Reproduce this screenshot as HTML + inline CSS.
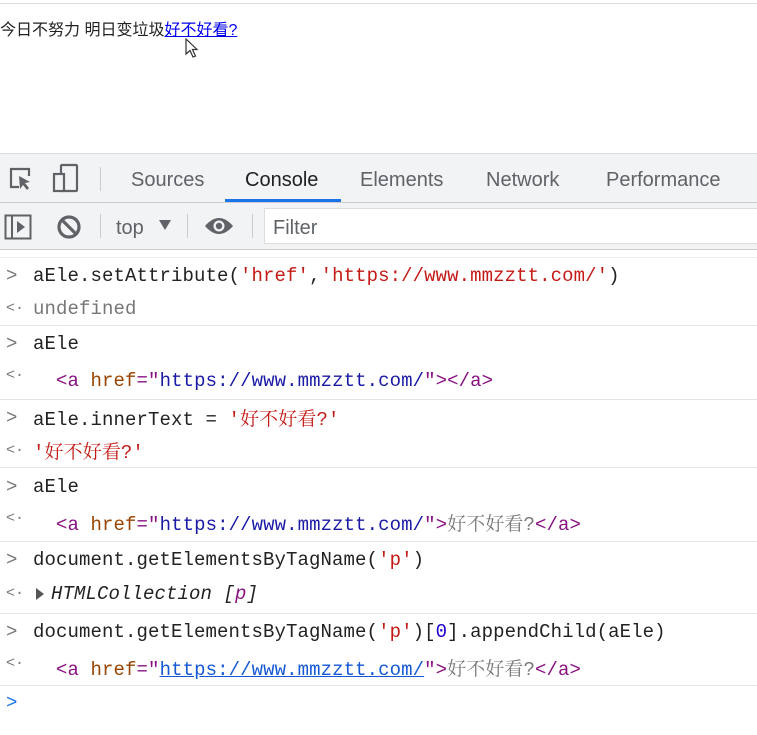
<!DOCTYPE html>
<html><head><meta charset="utf-8"><style>
*{margin:0;padding:0;box-sizing:border-box}
body{width:757px;height:735px;overflow:hidden;background:#fff;position:relative;font-family:"Liberation Sans","Noto Sans CJK SC",sans-serif}
.abs{position:absolute}
.mono{font-family:"Liberation Mono","Noto Serif CJK SC",monospace;font-size:19px;line-height:24px;white-space:pre;color:#222;letter-spacing:0.1px}
.cj{font-family:"Noto Serif CJK SC",serif}
.hr{position:absolute;left:0;right:0;height:1px;background:#e6e6e6}
.pr{position:absolute;left:6px;color:#777;font-family:"Liberation Mono",monospace;font-size:19px;line-height:24px}
.s{color:#c41a16}.t{color:#881280}.at{color:#994500}.v{color:#1a1aa6}.g{color:#777}
.tab{position:absolute;top:166px;font-size:20px;color:#5f6368;line-height:28px}
</style></head><body>
<div class="hr" style="top:3px;background:#ddd"></div>
<div class="abs" style="left:0;top:20px;font-size:16px;line-height:21px;color:#222">今日不努力 明日变垃圾<span style="color:#0000ee;text-decoration:underline">好不好看?</span></div>
<svg class="abs" style="left:185px;top:38px" width="14" height="22" viewBox="0 0 14 22"><path d="M1 1 L1 16 L5 12.5 L8 19 L10.5 18 L7.5 11.5 L12 11.5 Z" fill="#fff" stroke="#333" stroke-width="1.2"/></svg>

<div class="abs" style="left:0;top:153px;width:757px;height:50px;background:#f1f3f4;border-top:1px solid #dadce0;border-bottom:1px solid #cbcdd1"></div>
<svg class="abs" style="left:6px;top:164px" width="30" height="30" viewBox="0 0 30 30"><path d="M13 23 H5 V5 H23 V12" fill="none" stroke="#5f6368" stroke-width="2.2"/><path d="M13 12 L14 25 L17 21 L21 26 L23 24 L19 19 L24 18 Z" fill="#5f6368"/></svg>
<svg class="abs" style="left:52px;top:163px" width="30" height="30" viewBox="0 0 30 30"><rect x="9" y="2" width="16" height="26" rx="1" fill="none" stroke="#5f6368" stroke-width="2.2"/><rect x="2" y="11" width="10" height="17" fill="#f1f3f4" stroke="#5f6368" stroke-width="2.2"/></svg>
<div class="abs" style="left:100px;top:167px;width:1px;height:24px;background:#ccc"></div>
<div class="tab" style="left:131px">Sources</div>
<div class="tab" style="left:245px;color:#202124">Console</div>
<div class="abs" style="left:225px;top:199px;width:116px;height:3px;background:#1a73e8"></div>
<div class="tab" style="left:360px">Elements</div>
<div class="tab" style="left:486px">Network</div>
<div class="tab" style="left:606px">Performance</div>

<div class="abs" style="left:0;top:203px;width:757px;height:47px;background:#f1f3f4;border-bottom:1px solid #cbcdd1"></div>
<svg class="abs" style="left:4px;top:214px" width="28" height="26" viewBox="0 0 28 26"><rect x="1.5" y="1.5" width="25" height="23" fill="none" stroke="#5f6368" stroke-width="2"/><line x1="8" y1="2" x2="8" y2="24" stroke="#5f6368" stroke-width="2"/><path d="M13 7 L21 13 L13 19 Z" fill="#5f6368"/></svg>
<svg class="abs" style="left:56px;top:214px" width="26" height="26" viewBox="0 0 26 26"><circle cx="13" cy="13" r="10" fill="none" stroke="#5f6368" stroke-width="3.2"/><line x1="6" y1="6" x2="20" y2="20" stroke="#5f6368" stroke-width="3.2"/></svg>
<div class="abs" style="left:100px;top:214px;width:1px;height:24px;background:#ccc"></div>
<div class="abs" style="left:116px;top:214px;font-size:20px;line-height:28px;color:#5f6368">top</div>
<svg class="abs" style="left:158px;top:219px" width="14" height="12"><path d="M1 1 H13 L7 11 Z" fill="#5f6368"/></svg>
<div class="abs" style="left:187px;top:214px;width:1px;height:24px;background:#ccc"></div>
<svg class="abs" style="left:204px;top:216px" width="30" height="20" viewBox="0 0 30 20"><path d="M1 10 Q15 -6 29 10 Q15 26 1 10 Z" fill="#5f6368"/><circle cx="15" cy="10" r="5.5" fill="#f1f3f4"/><circle cx="15" cy="10" r="3.2" fill="#5f6368"/></svg>
<div class="abs" style="left:252px;top:214px;width:1px;height:24px;background:#ccc"></div>
<div class="abs" style="left:264px;top:208px;width:500px;height:36px;background:#fff;border:1px solid #ddd"></div>
<div class="abs" style="left:273px;top:214px;font-size:20px;line-height:28px;color:#5f6368">Filter</div>
<div class="hr" style="top:257px;background:#eee"></div>

<div class="pr" style="top:264px">&gt;</div>
<div class="abs mono" style="left:33px;top:264px">aEle.setAttribute(<span class="s">'href'</span>,<span class="s">'https://www.mmzztt.com/'</span>)</div>
<div class="pr" style="top:297px;font-size:15px">&lt;·</div>
<div class="abs mono g" style="left:33px;top:297px">undefined</div>
<div class="hr" style="top:325px"></div>

<div class="pr" style="top:332px">&gt;</div>
<div class="abs mono" style="left:33px;top:332px">aEle</div>
<div class="pr" style="top:364px;font-size:15px">&lt;·</div>
<div class="abs mono" style="left:56px;top:369px"><span class="t">&lt;a</span> <span class="at">href</span><span class="t">="</span><span class="v">https://www.mmzztt.com/</span><span class="t">"&gt;&lt;/a&gt;</span></div>
<div class="hr" style="top:399px"></div>

<div class="pr" style="top:406px">&gt;</div>
<div class="abs mono" style="left:33px;top:406px">aEle.innerText = <span class="s">'<span class="cj">好不好看</span>?'</span></div>
<div class="pr" style="top:439px;font-size:15px">&lt;·</div>
<div class="abs mono s" style="left:33px;top:439px">'<span class="cj">好不好看</span>?'</div>
<div class="hr" style="top:467px"></div>

<div class="pr" style="top:475px">&gt;</div>
<div class="abs mono" style="left:33px;top:475px">aEle</div>
<div class="pr" style="top:507px;font-size:15px">&lt;·</div>
<div class="abs mono" style="left:56px;top:511px"><span class="t">&lt;a</span> <span class="at">href</span><span class="t">="</span><span class="v">https://www.mmzztt.com/</span><span class="t">"&gt;</span><span class="cj g">好不好看</span><span class="g">?</span><span class="t">&lt;/a&gt;</span></div>
<div class="hr" style="top:541px"></div>

<div class="pr" style="top:548px">&gt;</div>
<div class="abs mono" style="left:33px;top:548px">document.getElementsByTagName(<span class="s">'p'</span>)</div>
<div class="pr" style="top:582px;font-size:15px">&lt;·</div>
<svg class="abs" style="left:35px;top:587px" width="10" height="14"><path d="M1 1 L9 7 L1 13 Z" fill="#555"/></svg>
<div class="abs mono" style="left:51px;top:582px;font-style:italic">HTMLCollection [<span class="t">p</span>]</div>
<div class="hr" style="top:613px"></div>

<div class="pr" style="top:620px">&gt;</div>
<div class="abs mono" style="left:33px;top:620px">document.getElementsByTagName(<span class="s">'p'</span>)[<span style="color:#1c00cf">0</span>].appendChild(aEle)</div>
<div class="pr" style="top:652px;font-size:15px">&lt;·</div>
<div class="abs mono" style="left:56px;top:656px"><span class="t">&lt;a</span> <span class="at">href</span><span class="t">="</span><span style="color:#1558d6;text-decoration:underline">https://www.mmzztt.com/</span><span class="t">"&gt;</span><span class="cj g">好不好看</span><span class="g">?</span><span class="t">&lt;/a&gt;</span></div>
<div class="hr" style="top:685px"></div>
<div class="pr" style="top:691px;color:#1a73e8">&gt;</div>
</body></html>
